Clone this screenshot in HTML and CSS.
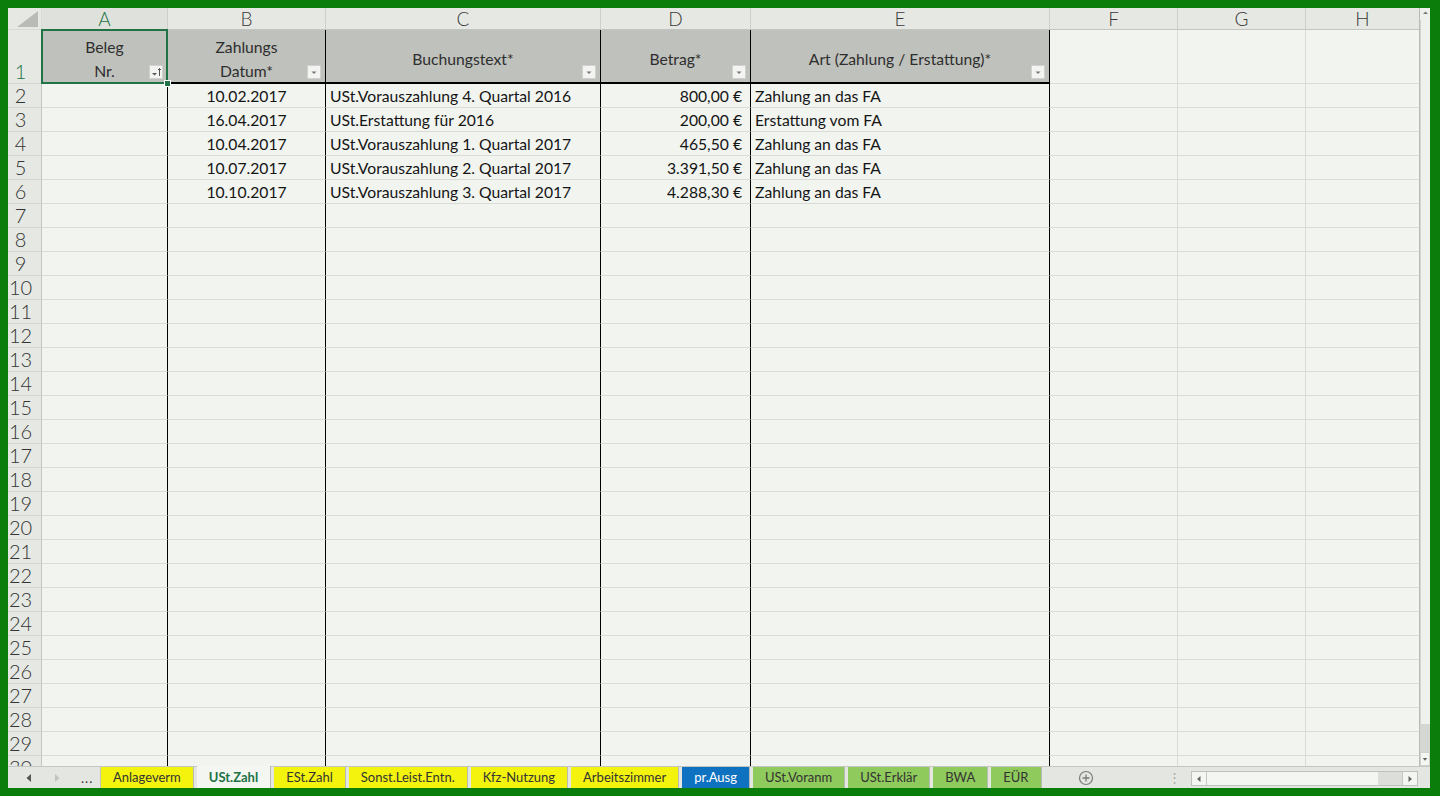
FILE: index.html
```html
<!DOCTYPE html>
<html lang="de">
<head>
    <meta charset="UTF-8">
    <meta name="viewport" content="width=device-width, initial-scale=1.0">
    <title>USt.Zahl</title>
    <link rel="stylesheet" href="styles.css">
</head>
<body>
    <div class="frame">
        <div class="window">
            <div class="main">
                <div class="grid" id="grid">
                    <!-- column headers -->
                    <div class="corner">
                        <svg width="34" height="22" viewBox="0 0 34 22"><polygon points="9,19 30,19 30,3" fill="#b9bcb6"/></svg>
                    </div>
                    <div class="ch on">A</div>
                    <div class="ch">B</div>
                    <div class="ch">C</div>
                    <div class="ch">D</div>
                    <div class="ch">E</div>
                    <div class="ch">F</div>
                    <div class="ch">G</div>
                    <div class="ch edge">H</div>

                    <!-- row 1: table header -->
                    <div class="rh on">1</div>
                    <div class="hd sel">Beleg<br>Nr.
                        <span class="filter">
                            <svg width="14" height="14" viewBox="0 0 14 14"><rect x="0.5" y="0.5" width="13" height="13" fill="#f4f5f3" stroke="#d0d2ce"/><path d="M3 8h5l-2.5 2.5z" fill="#555"/><path d="M10.5 11V3.5M9 5l1.5-1.5L12 5" stroke="#555" fill="none"/></svg>
                        </span>
                    </div>
                    <div class="hd">Zahlungs<br>Datum*
                        <span class="filter"><svg width="14" height="14" viewBox="0 0 14 14"><rect x="0.5" y="0.5" width="13" height="13" fill="#f4f5f3" stroke="#d0d2ce"/><path d="M4.5 6.5h5L7 9z" fill="#777"/></svg></span>
                    </div>
                    <div class="hd">Buchungstext*
                        <span class="filter"><svg width="14" height="14" viewBox="0 0 14 14"><rect x="0.5" y="0.5" width="13" height="13" fill="#f4f5f3" stroke="#d0d2ce"/><path d="M4.5 6.5h5L7 9z" fill="#777"/></svg></span>
                    </div>
                    <div class="hd">Betrag*
                        <span class="filter"><svg width="14" height="14" viewBox="0 0 14 14"><rect x="0.5" y="0.5" width="13" height="13" fill="#f4f5f3" stroke="#d0d2ce"/><path d="M4.5 6.5h5L7 9z" fill="#777"/></svg></span>
                    </div>
                    <div class="hd">Art (Zahlung / Erstattung)*
                        <span class="filter"><svg width="14" height="14" viewBox="0 0 14 14"><rect x="0.5" y="0.5" width="13" height="13" fill="#f4f5f3" stroke="#d0d2ce"/><path d="M4.5 6.5h5L7 9z" fill="#777"/></svg></span>
                    </div>
                    <div class="c"></div>
                    <div class="c"></div>
                    <div class="c edge"></div>

                    <!-- data rows -->
                    <div class="rh">2</div>
                    <div class="c t"></div>
                    <div class="c t mid">10.02.2017</div>
                    <div class="c t">USt.Vorauszahlung 4. Quartal 2016</div>
                    <div class="c t num">800,00 €</div>
                    <div class="c t">Zahlung an das FA</div>
                    <div class="c"></div><div class="c"></div><div class="c edge"></div>

                    <div class="rh">3</div>
                    <div class="c t"></div>
                    <div class="c t mid">16.04.2017</div>
                    <div class="c t">USt.Erstattung für 2016</div>
                    <div class="c t num">200,00 €</div>
                    <div class="c t">Erstattung vom FA</div>
                    <div class="c"></div><div class="c"></div><div class="c edge"></div>

                    <div class="rh">4</div>
                    <div class="c t"></div>
                    <div class="c t mid">10.04.2017</div>
                    <div class="c t">USt.Vorauszahlung 1. Quartal 2017</div>
                    <div class="c t num">465,50 €</div>
                    <div class="c t">Zahlung an das FA</div>
                    <div class="c"></div><div class="c"></div><div class="c edge"></div>

                    <div class="rh">5</div>
                    <div class="c t"></div>
                    <div class="c t mid">10.07.2017</div>
                    <div class="c t">USt.Vorauszahlung 2. Quartal 2017</div>
                    <div class="c t num">3.391,50 €</div>
                    <div class="c t">Zahlung an das FA</div>
                    <div class="c"></div><div class="c"></div><div class="c edge"></div>

                    <div class="rh">6</div>
                    <div class="c t"></div>
                    <div class="c t mid">10.10.2017</div>
                    <div class="c t">USt.Vorauszahlung 3. Quartal 2017</div>
                    <div class="c t num">4.288,30 €</div>
                    <div class="c t">Zahlung an das FA</div>
                    <div class="c"></div><div class="c"></div><div class="c edge"></div>
                </div>

                <div class="vscroll">
                    <div class="vs-btn"><svg width="9" height="10" viewBox="0 0 9 10"><path d="M2 6h5L4.5 3.5z" fill="#777"/></svg></div>
                    <div class="vs-track"></div>
                    <div class="vs-thumb"></div>
                    <div class="vs-btn down"><svg width="9" height="12" viewBox="0 0 9 12"><path d="M2 5h5L4.5 8z" fill="#666"/></svg></div>
                </div>
            </div>

            <div class="tabbar">
                <div class="nav">
                    <svg width="8" height="10" viewBox="0 0 8 10"><path d="M6 1v8L1.5 5z" fill="#555"/></svg>
                    <svg width="8" height="10" viewBox="0 0 8 10"><path d="M2 1v8L6.5 5z" fill="#c2c4c0"/></svg>
                    <span class="more">...</span>
                </div>
                <div class="tabs">
                    <div class="tab yellow">Anlageverm</div>
                    <div class="tab active">USt.Zahl</div>
                    <div class="tab yellow">ESt.Zahl</div>
                    <div class="tab yellow">Sonst.Leist.Entn.</div>
                    <div class="tab yellow">Kfz-Nutzung</div>
                    <div class="tab yellow">Arbeitszimmer</div>
                    <div class="tab blue">pr.Ausg</div>
                    <div class="tab green">USt.Voranm</div>
                    <div class="tab green">USt.Erklär</div>
                    <div class="tab green">BWA</div>
                    <div class="tab green">EÜR</div>
                    <div class="add">
                        <svg width="16" height="16" viewBox="0 0 16 16"><circle cx="8" cy="8" r="6.5" fill="none" stroke="#7a7c78" stroke-width="1.2"/><path d="M8 4.5v7M4.5 8h7" stroke="#7a7c78" stroke-width="1.3"/></svg>
                    </div>
                </div>
                <div class="splitter">⋮</div>
                <div class="hscroll">
                    <div class="hs-btn"><svg width="8" height="10" viewBox="0 0 8 10"><path d="M5.5 2v6L2 5z" fill="#666"/></svg></div>
                    <div class="hs-track"></div>
                    <div class="hs-thumb"></div>
                    <div class="hs-btn"><svg width="8" height="10" viewBox="0 0 8 10"><path d="M2.5 2v6L6 5z" fill="#666"/></svg></div>
                </div>
            </div>
        </div>
    </div>

    <script>
        // remaining empty rows 7-30
        const grid = document.getElementById('grid');
        for (let r = 7; r <= 30; r++) {
            let row = `<div class="rh">${r}</div>`;
            row += '<div class="c t"></div>'.repeat(5);
            row += '<div class="c"></div><div class="c"></div><div class="c edge"></div>';
            grid.insertAdjacentHTML('beforeend', row);
        }
    </script>
</body>
</html>
```

FILE: styles.css
```css
body {
    margin: 0;
    font-family: Lato, "Liberation Sans", sans-serif;
    color: #151515;
}
.frame {
    box-sizing: border-box;
    height: 796px;
    padding: 8px 10px 8px 8px;
    background-color: #0b7d0b;
}
.window {
    height: 780px;
    display: flex;
    flex-direction: column;
    background-color: #e6e9e3;
}
.main {
    display: flex;
    height: 758px;
}

/* sheet grid */
.grid {
    display: grid;
    grid-template-columns: 34px 126px 158px 275px 150px 299px 128px 128px 114px;
    grid-template-rows: 22px 54px;
    grid-auto-rows: 24px;
    width: 1412px;
    height: 758px;
    overflow: hidden;
    background-color: #f1f4ef;
    font-size: 15.7px;
}
.grid > div {
    box-sizing: border-box;
    border-right: 1px solid #d9dcd6;
    border-bottom: 1px solid #d9dcd6;
    white-space: nowrap;
    overflow: hidden;
}
.corner {
    background-color: #e6e9e3;
}
.corner svg {
    display: block;
}
.grid > .ch {
    overflow: visible;
    background-color: #e6e9e3;
    border-right-color: #cdd0ca;
    border-bottom-color: #c3c6c0;
    text-align: center;
    font-size: 19px;
    font-weight: 300;
    line-height: 21px;
    color: #3a3a3a;
}
.grid > .ch.on {
    color: #217346;
    background-color: #dfe2dc;
}
.grid > .rh {
    overflow: visible;
    display: flex;
    align-items: flex-end;
    justify-content: center;
    padding-right: 8px;
    background-color: #e6e9e3;
    border-right-color: #c3c6c0;
    border-bottom-color: #d3d6d0;
    font-size: 20px;
    font-weight: 300;
    line-height: 23px;
    color: #333;
}
.grid > .rh.on {
    color: #217346;
}
.grid > .edge {
    border-right-color: #b9bcb6;
}

/* table header row */
.grid > .hd {
    position: relative;
    display: flex;
    align-items: center;
    justify-content: center;
    padding-top: 6px;
    text-align: center;
    line-height: 24px;
    background-color: #bfc1bc;
    color: #2e2e2e;
    border-right-color: #000;
    border-bottom: 2px solid #000;
}
.filter {
    position: absolute;
    right: 4px;
    bottom: 3px;
    width: 14px;
    height: 14px;
}
.filter svg {
    display: block;
}
.grid > .sel {
    overflow: visible;
    z-index: 2;
}
.sel::after {
    content: '';
    position: absolute;
    left: -1px;
    top: -1px;
    right: -1px;
    bottom: -2px;
    border: 2px solid #217346;
}
.sel::before {
    content: '';
    position: absolute;
    right: -4px;
    bottom: -5px;
    width: 5px;
    height: 5px;
    background-color: #217346;
    border: 1px solid #fff;
    z-index: 3;
}

/* data cells */
.grid > .t {
    border-right-color: #000;
}
.c {
    padding: 0 4px;
    line-height: 24px;
}
.mid {
    text-align: center;
}
.num {
    text-align: right;
    padding-right: 8px;
}

/* vertical scrollbar */
.vscroll {
    width: 10px;
    display: flex;
    flex-direction: column;
    background-color: #eef1ec;
}
.vs-btn {
    height: 12px;
    display: flex;
    justify-content: center;
}
.vs-btn.down {
    height: 14px;
    background-color: #f4f6f2;
    border: 1px solid #d0d3cd;
    box-sizing: border-box;
}
.vs-track {
    flex: 1;
    border-left: 1px solid #d3d6d0;
}
.vs-thumb {
    height: 28px;
    background-color: #d5d8d2;
}

/* sheet tabs */
.tabbar {
    display: flex;
    height: 22px;
    box-sizing: border-box;
    border-top: 1px solid #c4c7c1;
    font-size: 13px;
    background-color: #e4e7e1;
}
.nav {
    width: 93px;
    display: flex;
    align-items: center;
    gap: 20px;
    padding-left: 17px;
    border-right: 1px solid #c2c5bf;
    box-sizing: border-box;
}
.more {
    color: #333;
    font-size: 13px;
    letter-spacing: 1px;
}
.tabs {
    display: flex;
    width: 1066px;
}
.tab {
    padding: 0 12px;
    line-height: 21px;
    color: #333;
    border-right: 1px solid #b8bbb5;
    margin-right: 3px;
}
.yellow {
    background-color: #f3f30e;
}
.blue {
    background-color: #0f72c0;
    color: #fff;
}
.green {
    background-color: #8fca5c;
}
.active {
    background-color: #f4f6f2;
    color: #217346;
    font-weight: bold;
    margin-top: -1px;
    line-height: 22px;
}
.add {
    margin-left: 33px;
    display: flex;
    align-items: center;
}
.splitter {
    width: 14px;
    text-align: center;
    color: #a8aba6;
    line-height: 21px;
}
.hscroll {
    display: flex;
    width: 227px;
    height: 15px;
    margin: 4px 0 0 10px;
    box-sizing: border-box;
    border: 1px solid #bfc2bc;
    background-color: #f4f6f2;
}
.hs-btn {
    width: 14px;
    display: flex;
    align-items: center;
    justify-content: center;
}
.hs-track {
    flex: 1;
    border-left: 1px solid #c6c9c3;
}
.hs-thumb {
    width: 24px;
    background-color: #dcdfd9;
    border-right: 1px solid #c6c9c3;
}
```
